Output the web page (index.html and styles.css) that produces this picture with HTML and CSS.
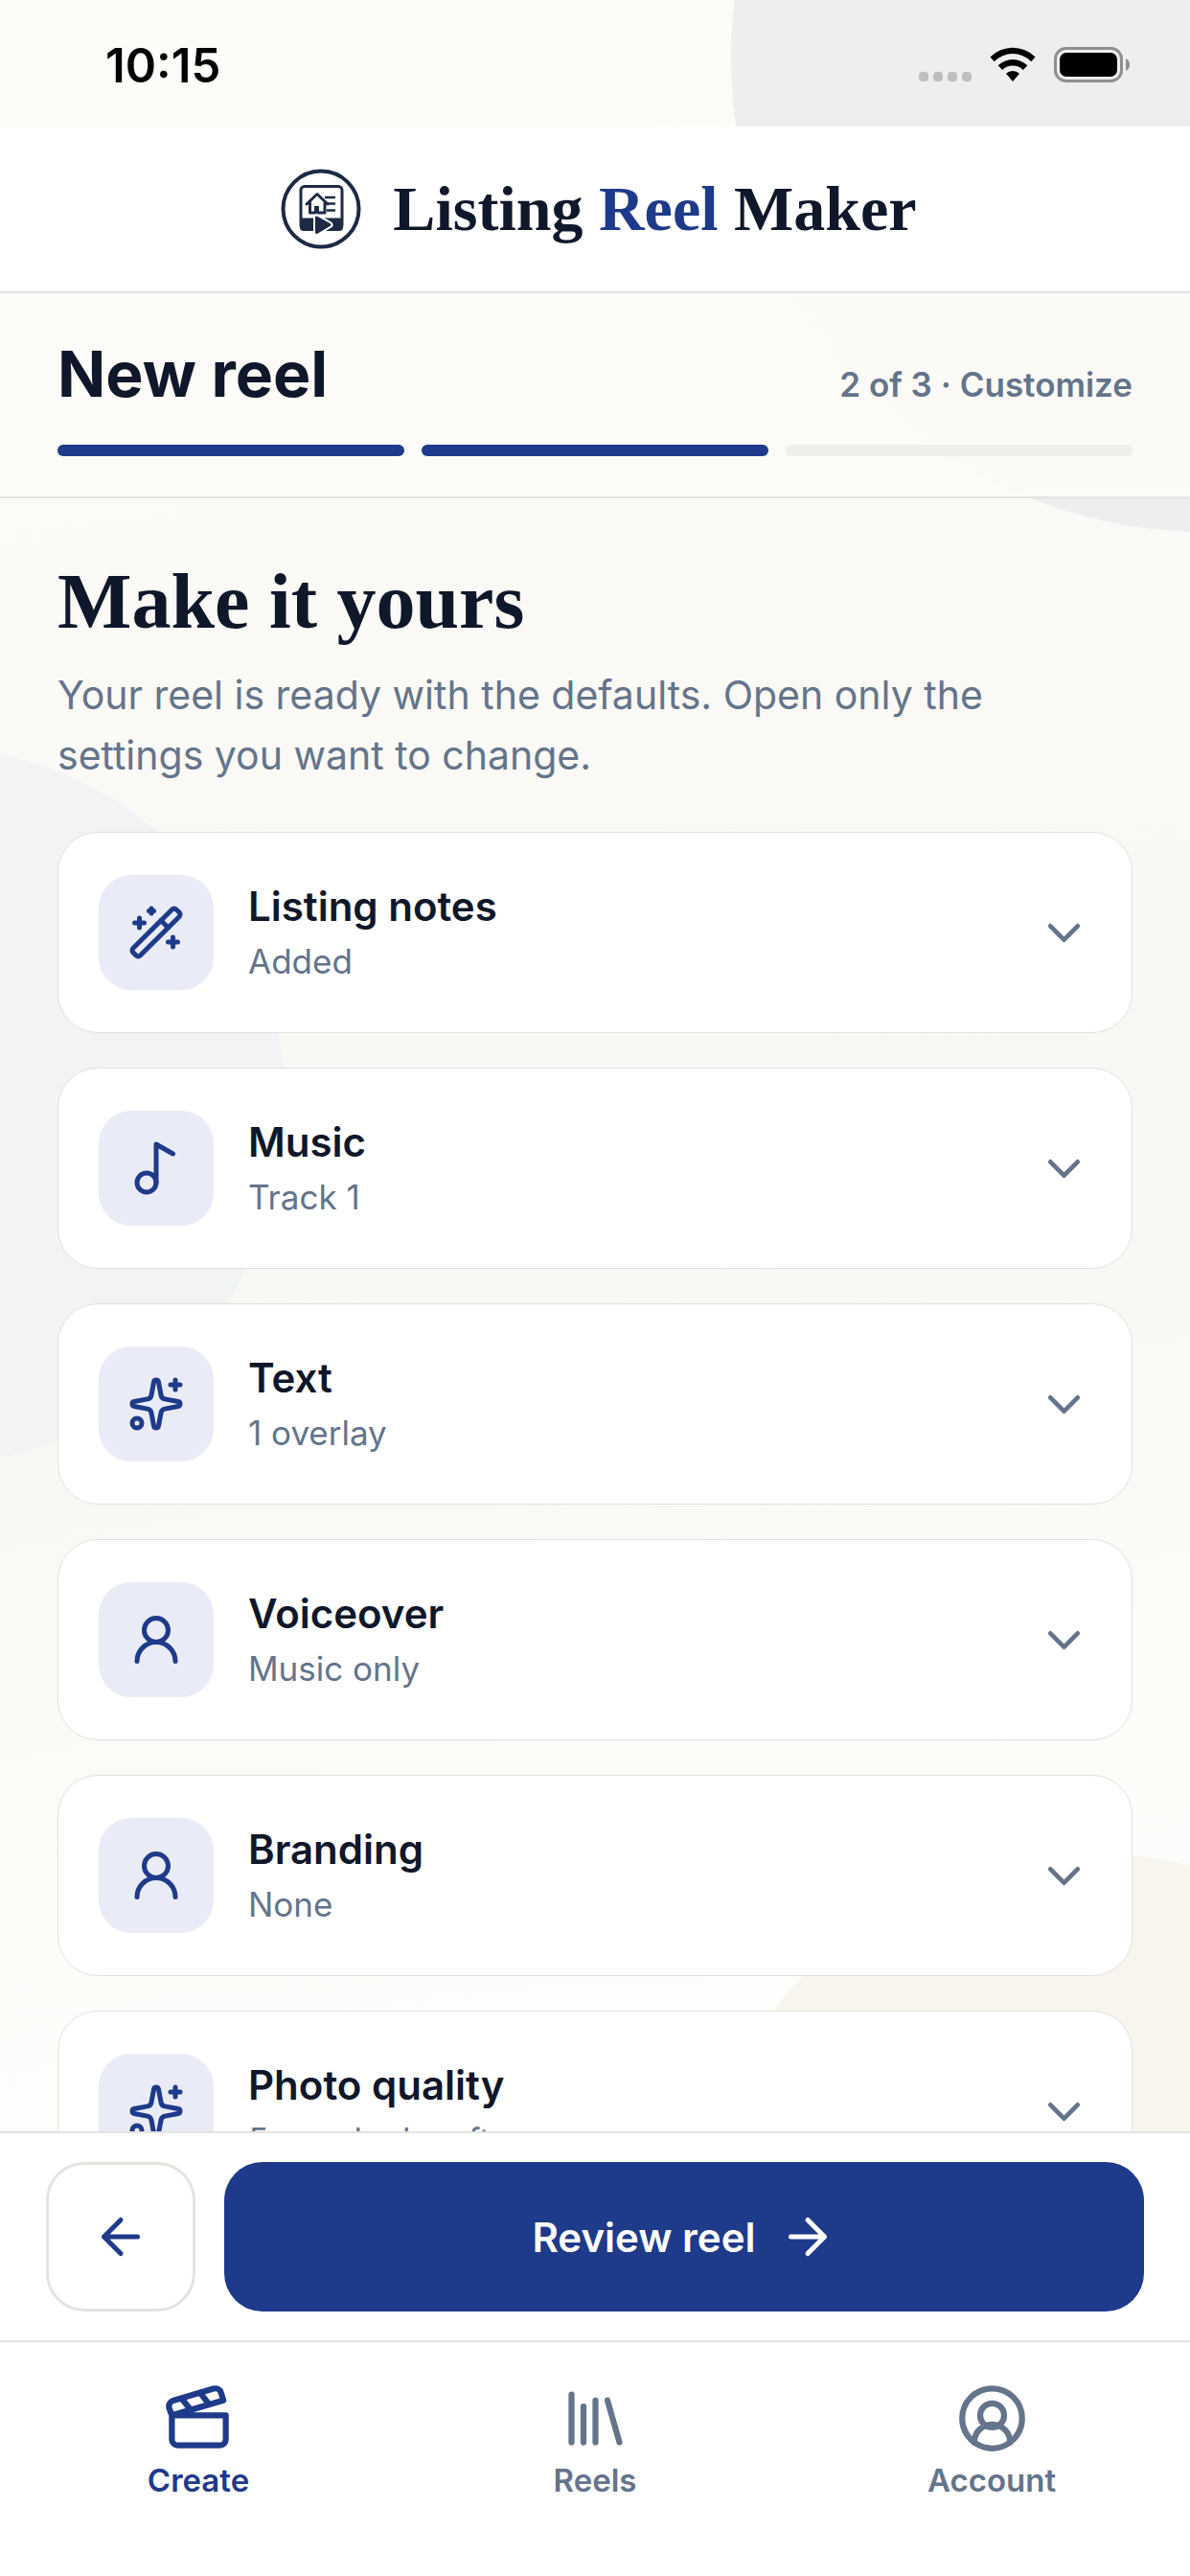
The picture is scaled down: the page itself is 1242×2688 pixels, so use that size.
FILE: index.html
```
<!DOCTYPE html>
<html lang="en">
  <head>
    <meta charset="UTF-8" />
    <meta name="viewport" content="width=device-width, initial-scale=1" />
    <title>Listing Reel Maker</title>
    <link rel="stylesheet" href="styles.css" />
  </head>
  <body>
    <!-- shared icons -->
    <svg class="sprite" aria-hidden="true">
      <symbol id="chevron" viewBox="0 0 24 24"><path d="m6 9 6 6 6-6" /></symbol>
      <symbol id="wand" viewBox="0 0 24 24">
        <path d="m21.64 3.64-1.28-1.28a1.21 1.21 0 0 0-1.72 0L2.36 18.64a1.21 1.21 0 0 0 0 1.72l1.28 1.28a1.2 1.2 0 0 0 1.72 0L21.64 5.36a1.2 1.2 0 0 0 0-1.72" />
        <path d="m14 7 3 3M5 6v4M19 14v4M10 2v2M7 8H3M21 16h-4M11 3H9" />
      </symbol>
      <symbol id="music" viewBox="0 0 24 24">
        <circle cx="8" cy="18" r="4" />
        <path d="M12 18V2l7 4" />
      </symbol>
      <symbol id="sparkles" viewBox="0 0 24 24">
        <path d="M11.017 2.814a1 1 0 0 1 1.966 0l1.051 5.558a2 2 0 0 0 1.594 1.594l5.558 1.051a1 1 0 0 1 0 1.966l-5.558 1.051a2 2 0 0 0-1.594 1.594l-1.051 5.558a1 1 0 0 1-1.966 0l-1.051-5.558a2 2 0 0 0-1.594-1.594l-5.558-1.051a1 1 0 0 1 0-1.966l5.558-1.051a2 2 0 0 0 1.594-1.594z" />
        <path d="M20 2v4M22 4h-4" />
        <circle cx="4" cy="20" r="2" />
      </symbol>
      <symbol id="person" viewBox="0 0 24 24">
        <circle cx="12" cy="8" r="5" />
        <path d="M20 21a8 8 0 0 0-16 0" />
      </symbol>
    </svg>

    <div class="app">
      <div class="blob blob-top"></div>
      <div class="blob blob-left"></div>
      <div class="blob blob-bottom"></div>

      <div class="status">
        <span class="time">10:15</span>
        <div class="indicators">
          <svg width="56" height="40" viewBox="0 0 56 40" fill="#bebec0">
            <rect x="1" y="27" width="10" height="10" rx="4" />
            <rect x="16" y="27" width="10" height="10" rx="4" />
            <rect x="31" y="27" width="10" height="10" rx="4" />
            <rect x="46" y="27" width="10" height="10" rx="4" />
          </svg>
          <svg width="48" height="40" viewBox="0 0 48 40">
            <path d="M0.5 11.500A33.500 33.500 0 0 1 47.500 11.500L43.300 16.200A27 27 0 0 0 4.700 16.200Z" />
            <path d="M8.700 20.300A22 22 0 0 1 39.300 20.300L34.900 25A15.500 15.500 0 0 0 13.100 25Z" />
            <path d="M17 28.700A10.500 10.500 0 0 1 31 28.700L24 37Z" />
          </svg>
          <svg width="80" height="40" viewBox="0 0 80 40">
            <rect x="1.500" y="2.500" width="69" height="34" rx="11" fill="none" stroke="#8f8f91" stroke-width="3" />
            <rect x="6" y="7" width="60" height="25" rx="7" />
            <path d="M75 13q4 2 4 6.500t-4 6.500z" fill="#8f8f91" />
          </svg>
        </div>
      </div>

      <header class="brand">
        <svg class="logo" viewBox="0 0 84 84" aria-hidden="true">
          <circle cx="42" cy="42" r="39.500" fill="none" stroke="#1d2a44" stroke-width="4" />
          <rect x="21" y="18.500" width="43" height="44.500" rx="4" fill="none" stroke="#1d2a44" stroke-width="3" />
          <path d="M20 51.500h45V61a4 4 0 0 1-4 4H24a4 4 0 0 1-4-4z" fill="#1d2a44" />
          <path d="M27 37 38 26.500 49 37M30.500 35V46H46V35" fill="none" stroke="#1d2a44" stroke-width="3" stroke-linecap="round" stroke-linejoin="round" />
          <path d="M35 39h5v8h-5z" fill="#1d2a44" />
          <path d="M46 30h11M49 36.500h8M48 43.500h9" stroke="#1d2a44" stroke-width="2.500" />
          <path d="M37.500 51v15.500L51 58.500z" fill="#1d2a44" stroke="#fff" stroke-width="7" stroke-linejoin="round" />
          <path d="M37.500 51v15.500L51 58.500z" fill="#1d2a44" stroke="#1d2a44" stroke-width="3" stroke-linejoin="round" />
        </svg>
        <span class="wordmark">Listing <em>Reel</em> Maker</span>
      </header>

      <section class="steps">
        <div class="steps-row">
          <h2>New reel</h2>
          <span class="steps-label">2 of 3 · Customize</span>
        </div>
        <div class="steps-bars">
          <i class="done"></i>
          <i class="done"></i>
          <i></i>
        </div>
      </section>

      <main>
        <h1>Make it yours</h1>
        <p class="intro">Your reel is ready with the defaults. Open only the settings you want to change.</p>

        <div class="cards">
          <button class="card" aria-expanded="false">
            <span class="tile"><svg class="icon"><use href="#wand" /></svg></span>
            <span class="text"><b>Listing notes</b><small>Added</small></span>
            <svg class="icon chevron"><use href="#chevron" /></svg>
          </button>
          <button class="card" aria-expanded="false">
            <span class="tile"><svg class="icon"><use href="#music" /></svg></span>
            <span class="text"><b>Music</b><small>Track 1</small></span>
            <svg class="icon chevron"><use href="#chevron" /></svg>
          </button>
          <button class="card" aria-expanded="false">
            <span class="tile"><svg class="icon"><use href="#sparkles" /></svg></span>
            <span class="text"><b>Text</b><small>1 overlay</small></span>
            <svg class="icon chevron"><use href="#chevron" /></svg>
          </button>
          <button class="card" aria-expanded="false">
            <span class="tile"><svg class="icon"><use href="#person" /></svg></span>
            <span class="text"><b>Voiceover</b><small>Music only</small></span>
            <svg class="icon chevron"><use href="#chevron" /></svg>
          </button>
          <button class="card" aria-expanded="false">
            <span class="tile"><svg class="icon"><use href="#person" /></svg></span>
            <span class="text"><b>Branding</b><small>None</small></span>
            <svg class="icon chevron"><use href="#chevron" /></svg>
          </button>
          <button class="card" aria-expanded="false">
            <span class="tile"><svg class="icon"><use href="#sparkles" /></svg></span>
            <span class="text"><b>Photo quality</b><small>5 may look soft</small></span>
            <svg class="icon chevron"><use href="#chevron" /></svg>
          </button>
        </div>
      </main>

      <div class="actions">
        <button class="back" aria-label="Back">
          <svg class="icon" viewBox="0 0 24 24"><path d="m12 19-7-7 7-7M19 12H5" /></svg>
        </button>
        <button class="next">
          Review reel
          <svg class="icon" viewBox="0 0 24 24"><path d="M5 12h14M12 5l7 7-7 7" /></svg>
        </button>
      </div>

      <nav class="tabs">
        <a href="#create" class="active">
          <svg class="icon" viewBox="0 0 24 24">
            <path d="M20.2 6 3 11l-.9-2.400c-.3-1.100.3-2.200 1.300-2.500l13.500-4c1.100-.3 2.200.3 2.500 1.300ZM6.200 5.300l3.100 3.900M12.400 3.400l3.100 4M3 11h18v8a2 2 0 0 1-2 2H5a2 2 0 0 1-2-2Z" />
          </svg>
          Create
        </a>
        <a href="#reels">
          <svg class="icon" viewBox="0 0 24 24"><path d="m16 6 4 14M12 6v14M8 8v12M4 4v16" /></svg>
          Reels
        </a>
        <a href="#account">
          <svg class="icon" viewBox="0 0 24 24">
            <path d="M18 20a6 6 0 0 0-12 0" />
            <circle cx="12" cy="11" r="4" />
            <circle cx="12" cy="12" r="10" />
          </svg>
          Account
        </a>
      </nav>
    </div>
  </body>
</html>
```
FILE: styles.css
```
* {
  box-sizing: border-box;
}

body {
  margin: 0;
  font-family: Inter, "Liberation Sans", sans-serif;
  color: #0f172a;
}

h1,
h2,
p {
  margin: 0;
}

button {
  font: inherit;
  color: inherit;
  cursor: pointer;
}

.sprite {
  display: none;
}

.icon {
  width: 60px;
  height: 60px;
  flex: none;
  fill: none;
  stroke: currentColor;
  stroke-width: 2;
  stroke-linecap: round;
  stroke-linejoin: round;
}

.app {
  position: relative;
  z-index: 0;
  display: flex;
  flex-direction: column;
  height: 100vh;
  overflow: hidden;
  background: linear-gradient(170deg, #fdfcf8 0%, #f8f7f3 50%, #fefefc 80%);
}

/* background circles */
.blob {
  position: absolute;
  z-index: -1;
  border-radius: 50%;
}

.blob-top {
  width: 990px;
  height: 990px;
  top: -435px;
  right: -511px;
  background: #eeeef0;
}

.blob-left {
  width: 750px;
  height: 750px;
  top: 779px;
  left: -452px;
  background: #f1f3f4;
}

.blob-bottom {
  width: 840px;
  height: 840px;
  top: 1934px;
  right: -318px;
  background: #f8f5ef;
}

/* status bar */
.status {
  display: flex;
  align-items: center;
  justify-content: space-between;
  height: 132px;
  padding: 4px 62px 0 110px;
}

.time {
  font-size: 49px;
  font-weight: 600;
  color: #000;
}

.indicators {
  display: flex;
  gap: 19px;
}

/* header */
.brand {
  display: flex;
  align-items: center;
  justify-content: center;
  gap: 33px;
  height: 174px;
  padding-left: 8px;
  background: rgba(255, 255, 255, 0.95);
  border-bottom: 2px solid #e4e3e0;
}

.logo {
  width: 84px;
  height: 84px;
}

.wordmark {
  font: bold 66px/84px "Liberation Serif", serif;
}

.wordmark em {
  font-style: normal;
  color: #1e3a8a;
}

/* progress */
.steps {
  padding: 42px 60px;
  background: rgba(252, 251, 247, 0.9);
  border-bottom: 2px solid #e4e3e0;
}

.steps-row {
  display: flex;
  align-items: baseline;
  justify-content: space-between;
}

.steps h2 {
  font-size: 66px;
  font-weight: 700;
  line-height: 84px;
}

.steps-label {
  font-size: 35px;
  font-weight: 600;
  color: #64748b;
}

.steps-bars {
  display: grid;
  grid-template-columns: repeat(3, 1fr);
  gap: 18px;
  margin-top: 32px;
}

.steps-bars i {
  height: 12px;
  border-radius: 6px;
  background: #efeeeb;
}

.steps-bars .done {
  background: #1e3a8a;
}

/* content */
main {
  flex: 1;
  min-height: 0;
  padding: 60px 60px 0;
  overflow-y: auto;
  scrollbar-width: none;
}

h1 {
  font: bold 82px/96px "Liberation Serif", serif;
}

.intro {
  margin: 18px 0 48px;
  padding-right: 60px;
  font-size: 41px;
  line-height: 63px;
  color: #64748b;
}

.cards {
  display: flex;
  flex-direction: column;
  gap: 36px;
}

.card {
  display: flex;
  align-items: center;
  gap: 36px;
  padding: 44px 42px;
  background: #fff;
  border: 1px solid #e2e1de;
  border-radius: 42px;
  text-align: left;
}

.tile {
  display: grid;
  place-items: center;
  width: 120px;
  height: 120px;
  border-radius: 34px;
  background: #e9ebf6;
  color: #1e3a8a;
}

.text {
  display: flex;
  flex: 1;
  flex-direction: column;
}

.text b {
  font-size: 42px;
  font-weight: 600;
  line-height: 60px;
}

.text small {
  font-size: 35px;
  line-height: 54px;
  color: #64748b;
}

.chevron {
  width: 57px;
  height: 57px;
  color: #64748b;
}

/* bottom buttons */
.actions {
  display: flex;
  gap: 30px;
  padding: 30px 48px;
  background: #fff;
  border-top: 2px solid #e4e3e0;
}

.back,
.next {
  display: flex;
  align-items: center;
  justify-content: center;
  height: 156px;
  border-radius: 40px;
}

.back {
  width: 156px;
  background: #fff;
  border: 3px solid #e4e3e0;
  color: #1e3a8a;
}

.next {
  flex: 1;
  gap: 24px;
  border: 0;
  background: #1e3a8a;
  color: #fff;
  font-size: 42px;
  font-weight: 600;
}

/* tab bar */
.tabs {
  display: grid;
  grid-template-columns: repeat(3, 1fr);
  height: 246px;
  padding-top: 42px;
  background: #fff;
  border-top: 2px solid #e4e3e0;
}

.tabs a {
  display: flex;
  flex-direction: column;
  align-items: center;
  gap: 6px;
  font-size: 33px;
  font-weight: 600;
  line-height: 42px;
  color: #64748b;
  text-decoration: none;
}

.tabs .active {
  color: #1e3a8a;
}

.tabs .icon {
  width: 75px;
  height: 75px;
}
```
